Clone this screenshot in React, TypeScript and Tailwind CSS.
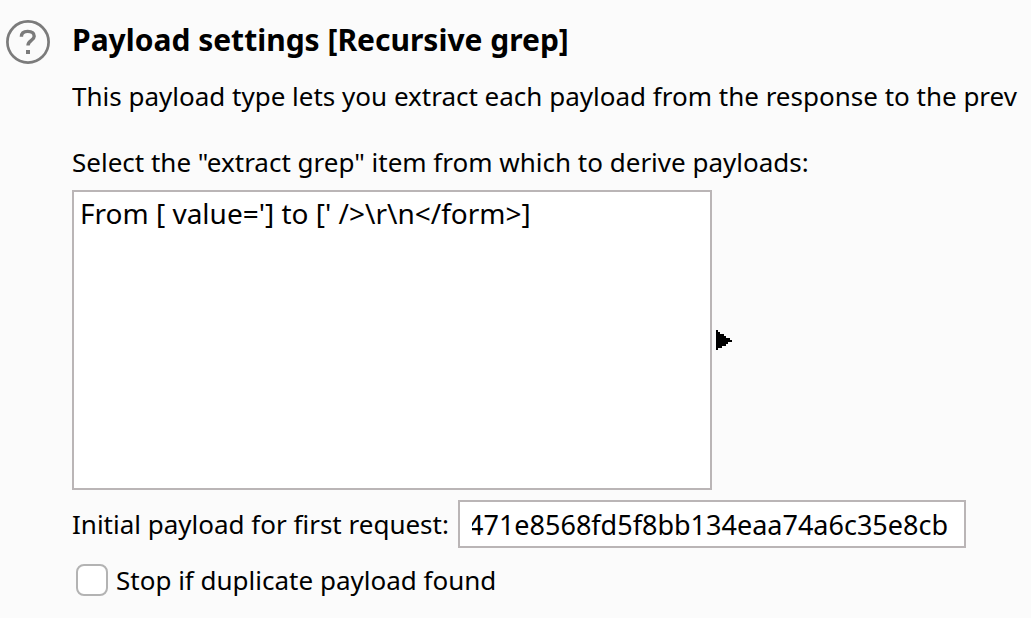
import { useLayoutEffect, useRef } from "react";

function HelpIcon() {
  return (
    <svg viewBox="0 0 44 44" className="h-11 w-11" fill="none" aria-hidden="true">
      <circle cx="22" cy="22" r="20.6" stroke="#7b7b7b" strokeWidth="2.7" />
      <path
        d="M15.4 16.8C15.4 13.2 17.8 11.4 21.6 11.4C25.8 11.4 28.2 13.2 28.2 16.3C28.2 20.6 22 20.4 22 25.6"
        stroke="#7b7b7b"
        strokeWidth="3.4"
      />
      <rect x="20" y="30" width="4" height="4" fill="#7b7b7b" />
    </svg>
  );
}

export default function App() {
  const payloadRef = useRef<HTMLInputElement>(null);

  // Keep the end of a long payload in view.
  useLayoutEffect(() => {
    const input = payloadRef.current;
    if (input) input.scrollLeft = input.scrollWidth;
  }, []);

  return (
    <main className="flex min-h-screen gap-[22px] overflow-hidden bg-[#fbfbfb] pt-5 pl-1.5 font-['Noto_Sans',sans-serif] text-[26px] leading-9 text-black">
      <button type="button" aria-label="Help" className="h-11 w-11 shrink-0">
        <HelpIcon />
      </button>
      <section className="min-w-0 flex-1">
        <h1 className="text-[30px] leading-10 font-bold whitespace-nowrap">Payload settings [Recursive grep]</h1>
        <p className="mt-[18px] overflow-hidden whitespace-nowrap">
          This payload type lets you extract each payload from the response to the prev
        </p>
        <label htmlFor="grep-items" className="mt-[30px] block whitespace-nowrap">
          Select the "extract grep" item from which to derive payloads:
        </label>
        <div className="mt-2.5 flex items-center gap-1">
          <select
            id="grep-items"
            size={8}
            className="h-[300px] w-[640px] overflow-hidden border-2 border-[#bab5b6] bg-white px-1.5 py-0.5 text-[28px] outline-none"
          >
            <option className="p-0 leading-9">{"From [ value='] to [' />\\r\\n</form>]"}</option>
          </select>
          <button type="button" aria-label="Expand">
            <svg viewBox="0 0 16 20" className="h-5 w-4" shapeRendering="crispEdges" aria-hidden="true">
              <path d="M0 0H2V2H4V4H8V6H10V8H14V10H16V12H12V14H10V16H6V18H2V20H0Z" />
            </svg>
          </button>
        </div>
        <div className="mt-2.5 flex items-center gap-2.5">
          <label htmlFor="initial-payload" className="w-[376px] whitespace-nowrap">
            Initial payload for first request:
          </label>
          <input
            id="initial-payload"
            ref={payloadRef}
            type="text"
            defaultValue="471e8568fd5f8bb134eaa74a6c35e8cb"
            className="h-12 w-[508px] border-2 border-[#bab5b6] bg-white pr-4 pl-3 text-[27px] outline-none"
          />
        </div>
        <div className="mt-3.5 flex items-center gap-2 pl-1">
          <input
            id="stop-duplicate"
            type="checkbox"
            className="h-8 w-8 appearance-none rounded-lg border-2 border-[#b3b3b3] bg-white"
          />
          <label htmlFor="stop-duplicate" className="whitespace-nowrap">
            Stop if duplicate payload found
          </label>
        </div>
      </section>
    </main>
  );
}
